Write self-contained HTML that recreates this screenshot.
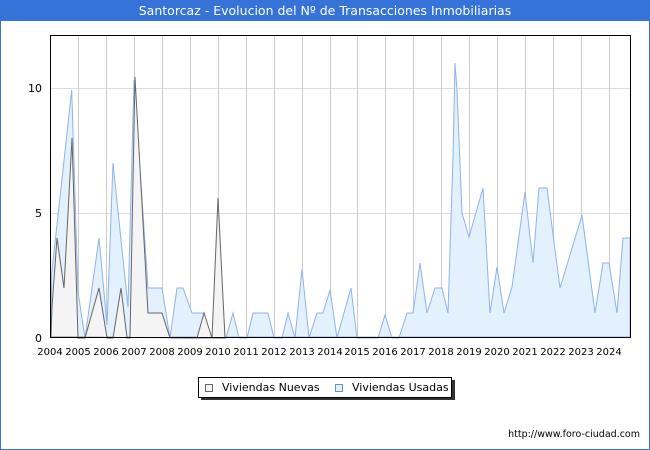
<!DOCTYPE html>
<html><head><meta charset="utf-8"><style>
body{margin:0;width:650px;height:450px;overflow:hidden;background:#fff;font-family:"DejaVu Sans","Liberation Sans",sans-serif;}
.frame{position:absolute;left:0;top:0;width:648px;height:448px;border:1px solid #3573d9;}
.title{position:absolute;left:0;top:0;width:650px;height:21px;background:#3573d9;color:#fff;font-size:12.5px;line-height:21px;text-align:center;}
svg{position:absolute;left:0;top:0;}
</style></head><body>
<div class="frame"></div>
<div class="title">Santorcaz - Evolucion del Nº de Transacciones Inmobiliarias</div>
<svg width="650" height="450" font-family="DejaVu Sans, Liberation Sans, sans-serif" font-size="11">
<g stroke="#cccccc" stroke-width="1">
<line x1="50" y1="88.5" x2="630" y2="88.5" stroke="#dddddd"/>
<line x1="50" y1="213.5" x2="630" y2="213.5" stroke="#dddddd"/>
<line x1="78.5" y1="36" x2="78.5" y2="337"/><line x1="106.5" y1="36" x2="106.5" y2="337"/><line x1="134.5" y1="36" x2="134.5" y2="337"/><line x1="162.5" y1="36" x2="162.5" y2="337"/><line x1="190.5" y1="36" x2="190.5" y2="337"/><line x1="218.5" y1="36" x2="218.5" y2="337"/><line x1="246.5" y1="36" x2="246.5" y2="337"/><line x1="274.5" y1="36" x2="274.5" y2="337"/><line x1="302.5" y1="36" x2="302.5" y2="337"/><line x1="330.5" y1="36" x2="330.5" y2="337"/><line x1="357.5" y1="36" x2="357.5" y2="337"/><line x1="385.5" y1="36" x2="385.5" y2="337"/><line x1="413.5" y1="36" x2="413.5" y2="337"/><line x1="441.5" y1="36" x2="441.5" y2="337"/><line x1="469.5" y1="36" x2="469.5" y2="337"/><line x1="497.5" y1="36" x2="497.5" y2="337"/><line x1="525.5" y1="36" x2="525.5" y2="337"/><line x1="553.5" y1="36" x2="553.5" y2="337"/><line x1="581.5" y1="36" x2="581.5" y2="337"/><line x1="609.5" y1="36" x2="609.5" y2="337"/>
</g>
<polygon fill="#e3f0fd" stroke="#8fb3ea" stroke-width="1" points="51,337 51.7,273 71.7,90 78,292 85,338 99,238 107,325 113,163 128,307 134,80 148,288 162,288 170,338 177,288 183,288 192,313 203,313 212,338 226,338 233,313 239,338 247,338 253,313 268,313 274,338 282,338 288,313 295,338 302,269 309,338 317,313 323,313 330,290 337,338 340,327 351,288 357,338 378,338 385,315 392,338 399,338 407,313 413,313 420,263 427,313 435,288 442,288 448,313 453,157 455,63 457,90 462,213 469,237 483,188 490,313 497,267 504,313 512,287 525,192 533,263 539,188 547,188 560,288 582,215 595,313 603,263 609,263 617,313 623,238 630,238 630,337"/>
<polygon fill="#f4f4f4" stroke="#666666" stroke-width="1" points="51,337 52,307 57,238 64,288 72,138 78,338 85,338 99,288 107,338 113,338 121,288 127,338 130,338 135,77 148,313 162,313 170,338 197,338 204,313 212,338 218,198 225,338"/>
<rect x="50.5" y="35.5" width="580" height="302" fill="none" stroke="#000" stroke-width="1"/>
<g fill="#000" text-anchor="end"><text x="42" y="92">10</text><text x="42" y="217">5</text><text x="42" y="342">0</text></g>
<g fill="#000" text-anchor="middle" font-size="10">
<text x="50" y="355">2004</text><text x="78" y="355">2005</text><text x="106" y="355">2006</text><text x="134" y="355">2007</text><text x="162" y="355">2008</text><text x="190" y="355">2009</text><text x="218" y="355">2010</text><text x="246" y="355">2011</text><text x="274" y="355">2012</text><text x="302" y="355">2013</text><text x="330" y="355">2014</text><text x="357" y="355">2015</text><text x="385" y="355">2016</text><text x="413" y="355">2017</text><text x="441" y="355">2018</text><text x="469" y="355">2019</text><text x="497" y="355">2020</text><text x="525" y="355">2021</text><text x="553" y="355">2022</text><text x="581" y="355">2023</text><text x="609" y="355">2024</text>
</g>
<rect x="201" y="380" width="254" height="20" fill="#333"/>
<rect x="198.5" y="377.5" width="253" height="20" fill="#fff" stroke="#000"/>
<rect x="205.5" y="384.5" width="7" height="7" fill="#f4f4f4" stroke="#666"/>
<text x="222" y="391" fill="#000">Viviendas Nuevas</text>
<rect x="335.5" y="384.5" width="7" height="7" fill="#e3f0fd" stroke="#6b8fc6"/>
<text x="352" y="391" fill="#000">Viviendas Usadas</text>
<text x="640" y="437" fill="#000" font-size="9.5" text-anchor="end">http://www.foro-ciudad.com</text>
</svg>
</body></html>
